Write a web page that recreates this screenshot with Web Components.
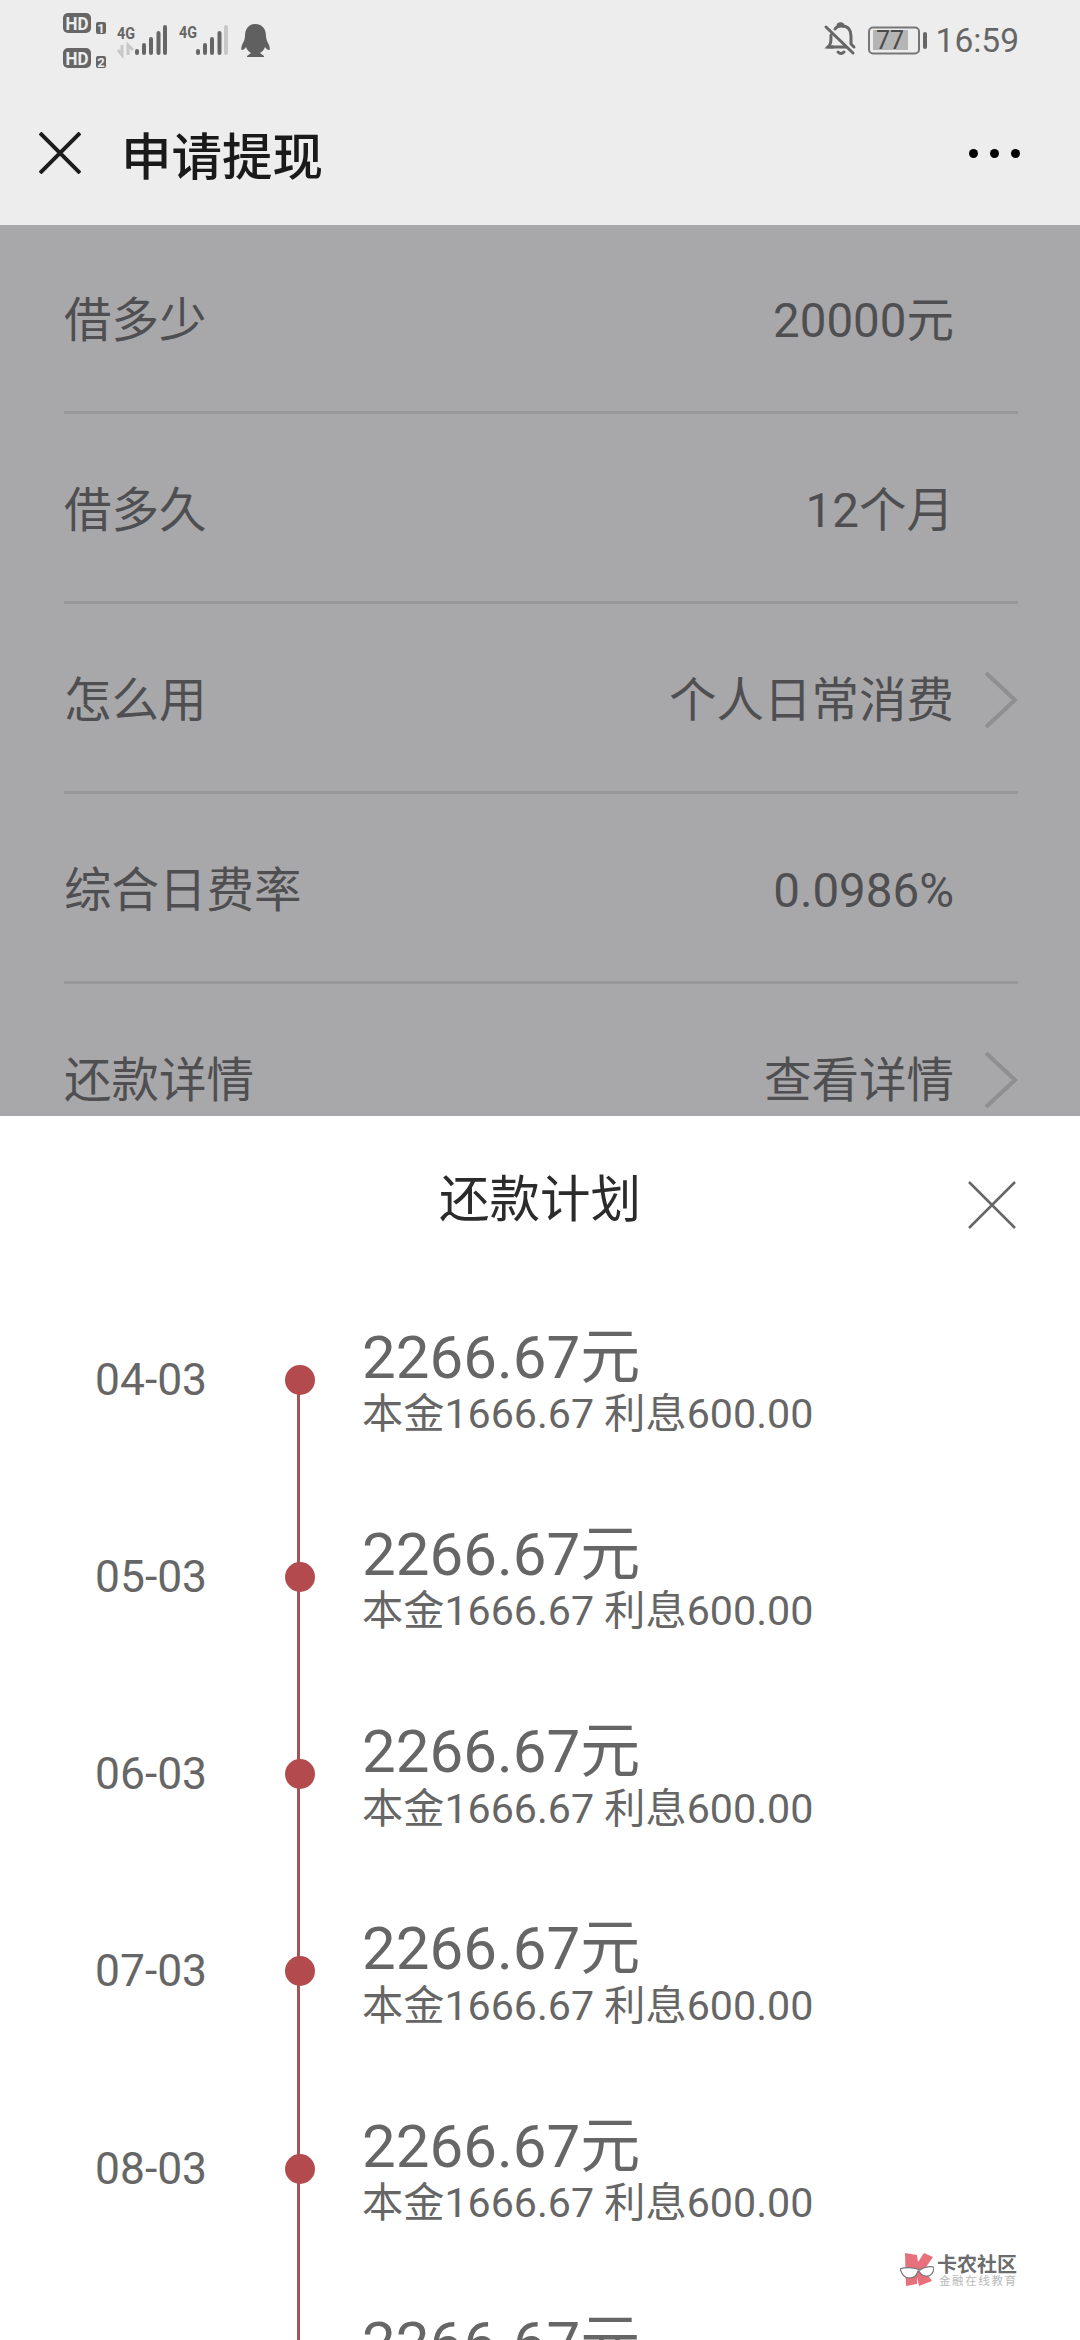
<!DOCTYPE html>
<html lang="zh">
<head>
<meta charset="utf-8">
<title>申请提现</title>
<style>
  html, body { margin: 0; padding: 0; background: #a8a8aa; }
  body { font-family: Roboto, "Noto Sans CJK SC", sans-serif; }
</style>
</head>
<body>
<app-shell>
  <status-bar slot="top"></status-bar>
  <title-bar slot="top">申请提现</title-bar>

  <form-row label="借多少" value="20000元"></form-row>
  <form-row label="借多久" value="12个月"></form-row>
  <form-row label="怎么用" value="个人日常消费" arrow></form-row>
  <form-row label="综合日费率" value="0.0986%"></form-row>
  <form-row label="还款详情" value="查看详情" arrow></form-row>

  <plan-sheet slot="sheet" heading="还款计划">
    <plan-item date="04-03"></plan-item>
    <plan-item date="05-03"></plan-item>
    <plan-item date="06-03"></plan-item>
    <plan-item date="07-03"></plan-item>
    <plan-item date="08-03"></plan-item>
    <plan-item date="09-03"></plan-item>
  </plan-sheet>
  <site-mark slot="sheet"></site-mark>
</app-shell>

<script>
const define = (name, html) => {
  customElements.define(name, class extends HTMLElement {
    constructor() {
      super();
      const shadow = this.attachShadow({ mode: 'open' });
      const template = document.createElement('template');
      template.innerHTML = typeof html === 'function' ? html(this) : html;
      shadow.appendChild(template.content.cloneNode(true));
    }
  });
};

define('app-shell', `
  <style>
    :host { display: block; position: relative; width: 1080px; height: 2340px; overflow: hidden; }
    .top { background: #ededed; height: 225px; }
    .rows { padding: 0 62px 0 64px; margin-top: -1.5px; }
    .sheet { position: absolute; left: 0; right: 0; top: 1116px; bottom: 0; background: #fff; overflow: hidden; }
  </style>
  <div class="top"><slot name="top"></slot></div>
  <div class="rows"><slot></slot></div>
  <div class="sheet"><slot name="sheet"></slot></div>
`);

define('status-bar', `
  <style>
    :host { display: flex; justify-content: space-between; height: 72px; color: #666; }
    svg { display: block; flex: none; }
    .right { display: flex; align-items: flex-start; }
    .time { font: 400 33.5px/1 Roboto, sans-serif; margin: 24px 61px 0 7px; color: #666; }
  </style>
  <svg width="300" height="72" viewBox="0 0 300 72">
    <g fill="#666">
      <rect x="63" y="13" width="28" height="20" rx="5"/>
      <rect x="96" y="22" width="10" height="12" rx="2"/>
      <rect x="63" y="48" width="28" height="20" rx="5"/>
      <rect x="96" y="56" width="10" height="12" rx="2"/>
    </g>
    <g font-family="Roboto, sans-serif" font-weight="700" fill="#ededed" text-anchor="middle">
      <text x="77" y="29.5" font-size="18" textLength="23" lengthAdjust="spacingAndGlyphs">HD</text>
      <text x="101" y="32.5" font-size="13">1</text>
      <text x="77" y="64.5" font-size="18" textLength="23" lengthAdjust="spacingAndGlyphs">HD</text>
      <text x="101" y="66.5" font-size="13">2</text>
    </g>
    <g font-family="Roboto, sans-serif" font-weight="700" fill="#666" font-size="17">
      <text x="117" y="39" textLength="18" lengthAdjust="spacingAndGlyphs">4G</text>
      <text x="179" y="38" textLength="18" lengthAdjust="spacingAndGlyphs">4G</text>
    </g>
    <path d="M122 45v10l-4-5M128 55V45l5 5" fill="none" stroke="#c8c8c8" stroke-width="3"/>
    <g fill="#666">
      <rect x="135" y="49" width="4" height="6" rx="2"/>
      <rect x="142" y="43" width="4" height="12" rx="2"/>
      <rect x="149" y="37" width="4" height="18" rx="2"/>
      <rect x="156.5" y="31" width="4" height="24" rx="2"/>
      <rect x="163" y="25" width="4" height="30" rx="2"/>
      <rect x="196" y="49" width="4" height="6" rx="2"/>
      <rect x="203" y="43" width="4" height="12" rx="2"/>
      <rect x="210" y="37" width="4" height="18" rx="2"/>
      <rect x="217.5" y="31" width="4" height="24" rx="2"/>
    </g>
    <rect x="224" y="25" width="4" height="30" rx="2" fill="#c8c8c8"/>
    <path d="M255 24c-7 0-10 6-10 12 0 3-1 5-3 9-1 3-1 5 0 5s3-1 4-3c1 3 3 5 5 6l-4 3v1h17v-1l-4-3c2-1 4-3 5-6 1 2 3 3 4 3s1-2 0-5c-2-4-3-6-3-9 0-6-3-12-11-12z" fill="#606060"/>
  </svg>
  <div class="right">
    <svg width="106" height="66" viewBox="0 0 106 66">
      <g fill="none" stroke="#666" stroke-width="3" stroke-linecap="round">
        <path d="M10 47h-5c3-3 3-5 3-12M12 29c2-3 5-3 7-3 6 0 9 4 9 10v8l3 3"/>
        <path d="M15 26c0-3 5-3 5 0M15 52c2 2 4 2 6 0"/>
        <path d="M3 27l27 26"/>
        <path d="M5 47h18"/>
      </g>
      <rect x="46" y="27.5" width="50" height="26" rx="4" fill="none" stroke="#777" stroke-width="2"/>
      <rect x="50" y="30" width="35" height="20" fill="#b5b5b5"/>
      <rect x="100" y="32" width="4" height="17" rx="2" fill="#666"/>
      <text x="67" y="49" font-family="Roboto, sans-serif" font-size="25" fill="#4a4a4a" text-anchor="middle">77</text>
    </svg>
    <span class="time">16:59</span>
  </div>
`);

define('title-bar', `
  <style>
    :host { display: flex; align-items: center; height: 153px; padding: 9px 0 0 39px; box-sizing: border-box; }
    .close { flex: none; display: block; }
    h1 { margin: 0 0 0 40px; font: 500 50.5px/1 "Noto Sans CJK SC", sans-serif; color: #1a1a1a; flex: 1; }
    .more { flex: none; display: flex; gap: 12px; margin-right: 60px; }
    .more i { width: 9px; height: 9px; border-radius: 50%; background: #000; }
  </style>
  <svg class="close" width="42" height="42" viewBox="0 0 42 42"><path d="M1 1l40 40M41 1L1 41" stroke="#1c1c1c" stroke-width="4" fill="none"/></svg>
  <h1><slot></slot></h1>
  <div class="more"><i></i><i></i><i></i></div>
`);

define('form-row', el => `
  <style>
    :host { display: flex; align-items: center; box-sizing: border-box; height: 190px; padding-top: 9px; border-bottom: 3px solid #98989a; font: 400 47.5px/1 Roboto, "Noto Sans CJK SC", sans-serif; color: #4f4f51; }
    :host(:first-child) { height: 188.5px; padding-top: 11px; }
    .label { flex: 1; }
    .arrow { flex: none; width: 64px; display: flex; justify-content: flex-end; }
    svg { display: block; margin-top: -4px; }
  </style>
  <span class="label">${el.getAttribute('label')}</span>
  <span class="value">${el.getAttribute('value')}</span>
  <span class="arrow">${el.hasAttribute('arrow') ? '<svg width="34" height="58" viewBox="0 0 34 58"><path d="M2 2l29 27L2 56" fill="none" stroke="#8f8f91" stroke-width="4"/></svg>' : ''}</span>
`);

define('plan-sheet', el => `
  <style>
    :host { display: block; color: #666; }
    header { position: relative; height: 158px; display: flex; align-items: center; justify-content: center; }
    h2 { margin: 0; font: 400 50.5px/1 "Noto Sans CJK SC", sans-serif; color: #2b2b2b; }
    .x { position: absolute; left: 968px; top: 65px; display: block; }
    .list { padding-top: 50.5px; }
  </style>
  <header>
    <h2>${el.getAttribute('heading')}</h2>
    <svg class="x" width="48" height="48" viewBox="0 0 48 48"><path d="M1 1l46 46M47 1L1 47" stroke="#666" stroke-width="2.5" fill="none"/></svg>
  </header>
  <div class="list"><slot></slot></div>
`);

define('plan-item', el => `
  <style>
    :host { display: flex; position: relative; height: 197.3px; color: #666; }
    :host(:first-child) .rail { top: 55px; }
    .date { width: 283px; box-sizing: border-box; padding: 33px 0 0 95px; font: 400 44.4px/1 Roboto, sans-serif; }
    .rail { position: absolute; left: 297px; top: 0; bottom: 0; width: 3px; background: #a45358; }
    .dot { position: absolute; left: 285px; top: 40px; width: 30px; height: 30px; border-radius: 50%; background: #b34b4e; }
    .body { margin: -2px 0 0 79px; }
    .amount { font: 400 60px/69.5px Roboto, "Noto Sans CJK SC", sans-serif; }
    .detail { font: 400 41.2px/44px Roboto, "Noto Sans CJK SC", sans-serif; }
  </style>
  <div class="date">${el.getAttribute('date')}</div>
  <i class="rail"></i><i class="dot"></i>
  <div class="body">
    <div class="amount">2266.67元</div>
    <div class="detail">本金1666.67 利息600.00</div>
  </div>
`);

define('site-mark', `
  <style>
    :host { position: absolute; left: 900px; top: 1137px; display: flex; gap: 3px; align-items: center; }
    svg { display: block; }
    .name { font: 700 20px/20px "Noto Sans CJK SC", sans-serif; color: #6c6c6c; }
    .sub { font: 400 11.5px/13px "Noto Sans CJK SC", sans-serif; color: #b9b9b9; letter-spacing: 1.6px; margin-left: 2px; }
  </style>
  <svg width="34" height="34" viewBox="0 0 34 34">
    <path d="M5 0l12 2 1 7 6-9 9 4-9 13 8 11-13 5-2-9v7L6 33z" fill="#e8707c"/>
    <path d="M0 16c5-2 14-2 20 1 2-2 8-4 14-3 0 6-4 10-8 9-4 0-6-3-7-5h-1c-1 4-4 7-9 7-5 0-7-4-9-9z" fill="#fff" stroke="#777" stroke-width="1.2"/>
  </svg>
  <div>
    <div class="name">卡农社区</div>
    <div class="sub">金融在线教育</div>
  </div>
`);
</script>
</body>
</html>
